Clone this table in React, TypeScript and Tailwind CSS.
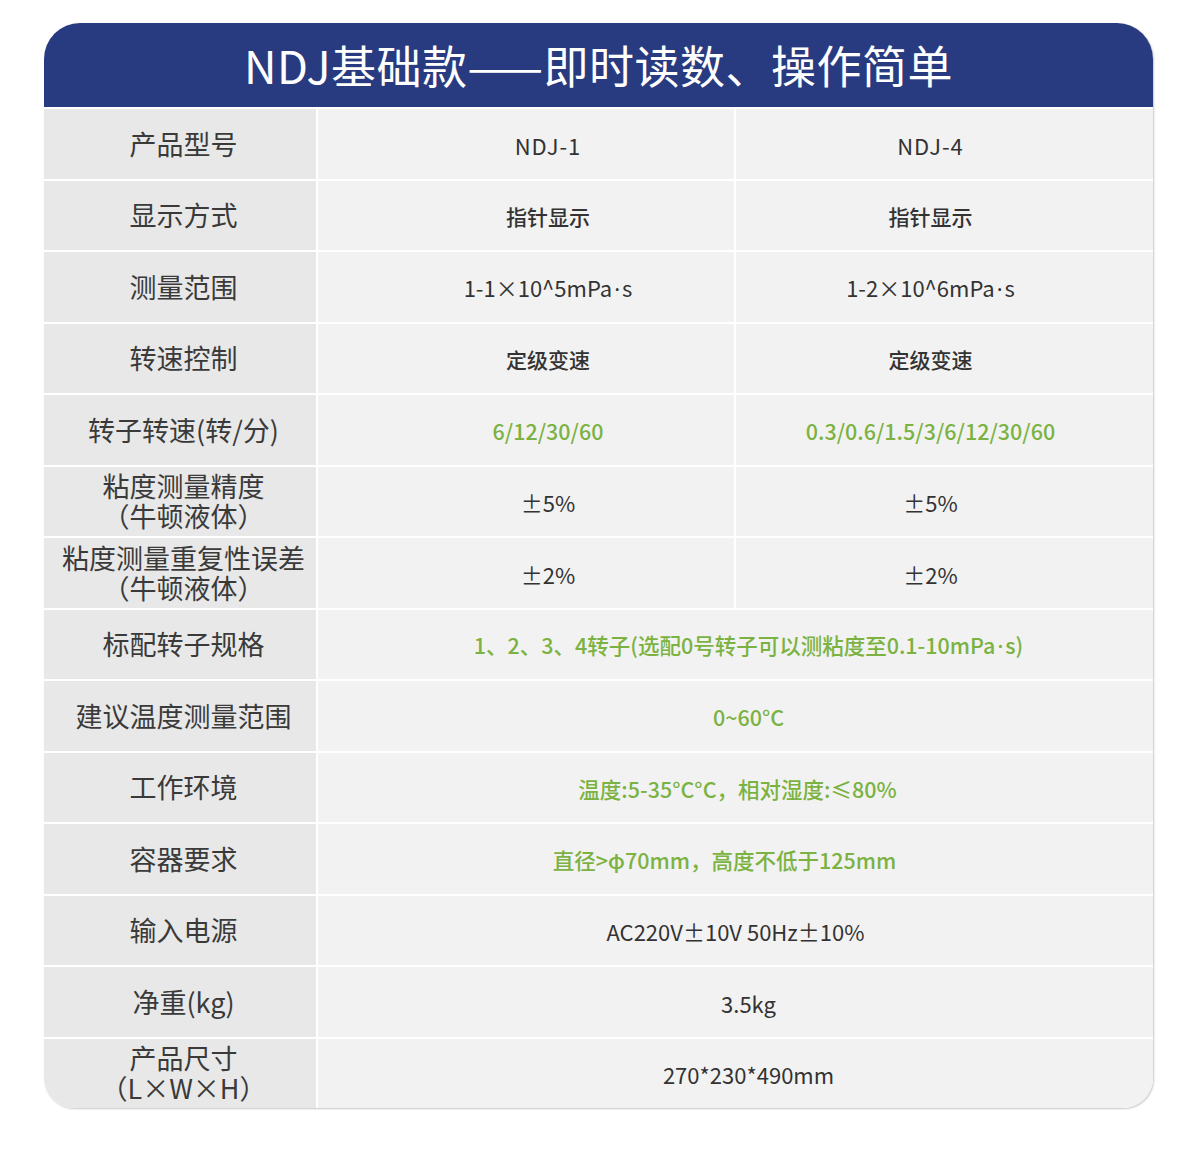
import type { ReactNode } from 'react'

type Row = {
  label: ReactNode
  a?: ReactNode
  b?: ReactNode
  both?: ReactNode
  tone?: 'dark' | 'medium' | 'green'
  pad?: string
}

const paren = (text: string) => <span className="[font-feature-settings:'halt']">（{text}）</span>
const dot = <span className="mx-[2px] font-['Noto_Sans',sans-serif]">·</span>

const rows: Row[] = [
  { label: '产品型号', a: 'NDJ-1', b: 'NDJ-4', tone: 'dark' },
  { label: '显示方式', a: '指针显示', b: '指针显示', tone: 'medium' },
  {
    label: '测量范围',
    a: <>1-1×10^5mPa{dot}s</>,
    b: <>1-2×10^6mPa{dot}s</>,
    tone: 'dark',
  },
  { label: '转速控制', a: '定级变速', b: '定级变速', tone: 'medium' },
  { label: '转子转速(转/分)', a: '6/12/30/60', b: '0.3/0.6/1.5/3/6/12/30/60', tone: 'green' },
  {
    label: (
      <>
        粘度测量精度
        <br />
        {paren('牛顿液体')}
      </>
    ),
    a: '±5%',
    b: '±5%',
    tone: 'dark',
  },
  {
    label: (
      <>
        粘度测量重复性误差
        <br />
        {paren('牛顿液体')}
      </>
    ),
    a: '±2%',
    b: '±2%',
    tone: 'dark',
  },
  {
    label: '标配转子规格',
    both: <>1、2、3、4转子(选配0号转子可以测粘度至0.1-10mPa{dot}s)</>,
    tone: 'green',
    pad: 'pl-[26px]',
  },
  { label: '建议温度测量范围', both: '0~60°C', tone: 'green', pad: 'pl-[26px]' },
  { label: '工作环境', both: '温度:5-35°C°C，相对湿度:≤80%', tone: 'green', pad: 'pl-[4px]' },
  { label: '容器要求', both: '直径>φ70mm，高度不低于125mm', tone: 'green', pad: 'pr-[22px]' },
  { label: '输入电源', both: 'AC220V±10V 50Hz±10%', tone: 'dark', pad: 'pl-0' },
  { label: '净重(kg)', both: '3.5kg', tone: 'dark', pad: 'pl-[26px]' },
  {
    label: (
      <>
        产品尺寸
        <br />
        {paren('L×W×H')}
      </>
    ),
    both: '270*230*490mm',
    tone: 'dark',
    pad: 'pl-[26px]',
  },
]

const toneClass = (tone: Row['tone']) => {
  if (tone === 'green') return 'text-[21.5px] font-medium text-[#7bb241]'
  if (tone === 'medium') return 'text-[21px] font-medium text-[#333333]'
  return 'text-[22px] font-normal text-[#333333]'
}

export default function App() {
  return (
    <div className="min-h-[1162px] bg-white pt-[23px] font-['Noto_Sans_CJK_SC','Noto_Sans',sans-serif]">
      <div className="mx-[44px] w-[1109px] overflow-hidden rounded-t-[36px] rounded-b-[30px] bg-white shadow-[1px_1px_2px_rgba(0,0,0,0.22)]">
        <div className="flex h-[84px] items-center justify-center bg-[#283b80] pb-[2px] text-[45px] leading-none tracking-[0.5px] text-white">
          NDJ基础款——即时读数、操作简单
        </div>
        <div className="mt-[2px] grid grid-cols-[272px_416px_1fr] gap-[2px]">
          {rows.map((row, i) => (
            <div key={i} className="contents">
              <div className="flex h-[69.5px] items-center justify-center bg-[#e8e8e8] pl-[7px] text-center text-[27px] leading-[30px] text-[#3a3a3a]">
                <span>{row.label}</span>
              </div>
              {row.both ? (
                <div
                  className={`col-span-2 flex h-[69.5px] items-center justify-center bg-[#f2f2f2] pt-[3px] ${row.pad ?? ''} ${toneClass(row.tone)}`}
                >
                  <span>{row.both}</span>
                </div>
              ) : (
                <>
                  <div
                    className={`flex h-[69.5px] items-center justify-center bg-[#f2f2f2] pl-[44px] pt-[3px] ${toneClass(row.tone)}`}
                  >
                    <span className={i === 0 ? 'tracking-[1px]' : ''}>{row.a}</span>
                  </div>
                  <div
                    className={`flex h-[69.5px] items-center justify-center bg-[#f2f2f2] pr-[28px] pt-[3px] ${toneClass(row.tone)}`}
                  >
                    <span className={i === 0 ? 'tracking-[1px]' : ''}>{row.b}</span>
                  </div>
                </>
              )}
            </div>
          ))}
        </div>
      </div>
    </div>
  )
}
